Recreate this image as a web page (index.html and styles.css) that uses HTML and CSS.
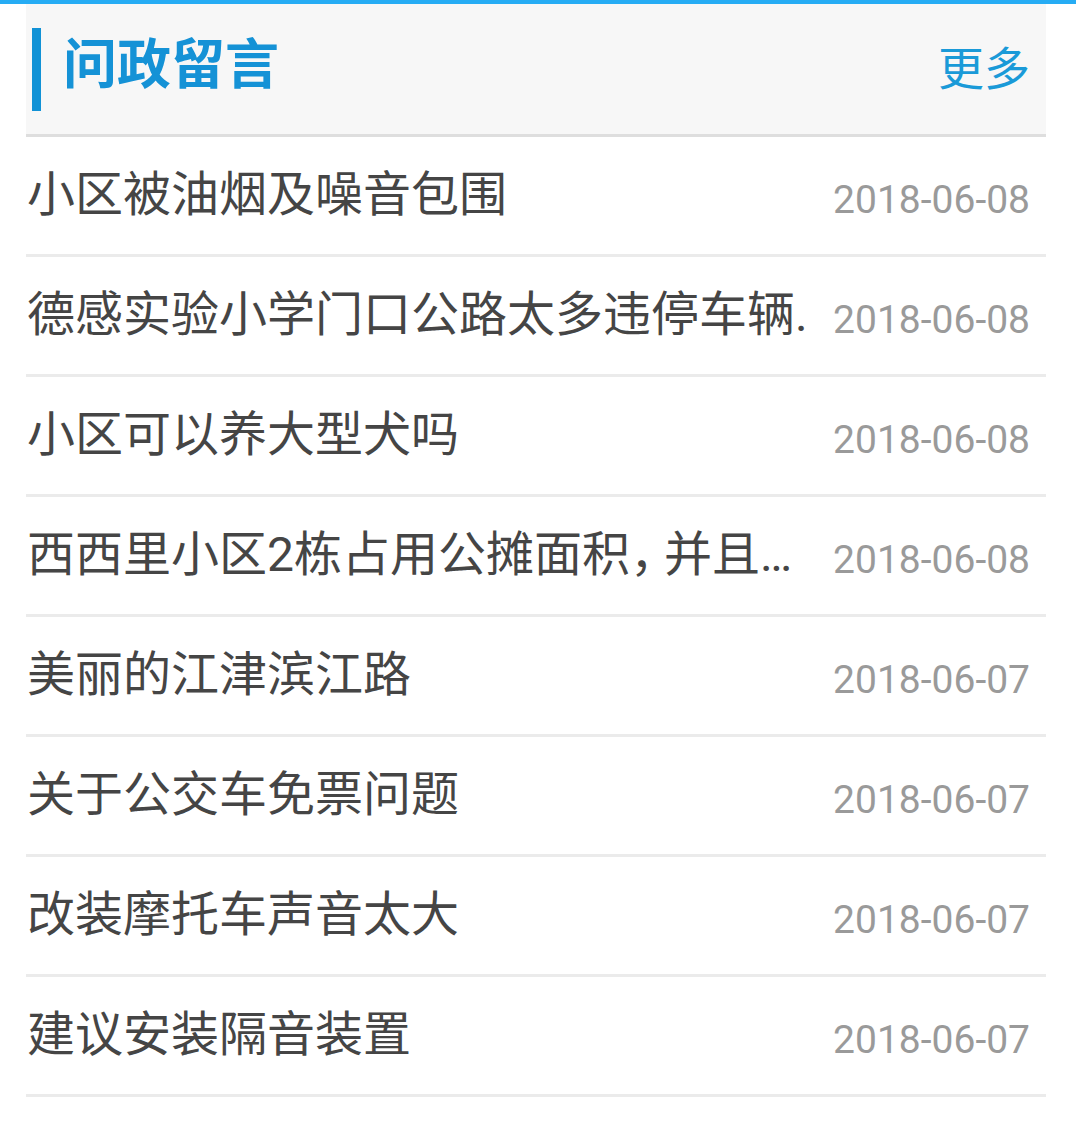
FILE: index.html
```html
<!DOCTYPE html>
<html lang="zh-CN">

<head>
    <meta charset="UTF-8">
    <title>问政留言</title>
    <link rel="stylesheet" href="styles.css">
</head>

<body>
    <div class="top-line"></div>
    <div class="panel">
        <div class="panel-head">
            <span class="head-bar"></span>
            <h2 class="head-title">问政留言</h2>
            <a class="head-more" href="#">更多</a>
        </div>
        <ul class="msg-list">
            <li class="msg-item"><span class="msg-title">小区被油烟及噪音包围</span><span class="msg-date">2018-06-08</span></li>
            <li class="msg-item"><span class="msg-title">德感实验小学门口公路太多违停车辆.</span><span class="msg-date">2018-06-08</span></li>
            <li class="msg-item"><span class="msg-title">小区可以养大型犬吗</span><span class="msg-date">2018-06-08</span></li>
            <li class="msg-item"><span class="msg-title">西西里小区2栋占用公摊面积<span class="punct">，</span>并且…</span><span class="msg-date">2018-06-08</span></li>
            <li class="msg-item"><span class="msg-title">美丽的江津滨江路</span><span class="msg-date">2018-06-07</span></li>
            <li class="msg-item"><span class="msg-title">关于公交车免票问题</span><span class="msg-date">2018-06-07</span></li>
            <li class="msg-item"><span class="msg-title">改装摩托车声音太大</span><span class="msg-date">2018-06-07</span></li>
            <li class="msg-item"><span class="msg-title">建议安装隔音装置</span><span class="msg-date">2018-06-07</span></li>
        </ul>
    </div>
</body>

</html>
```

FILE: styles.css
```css
body {
    margin: 0;
    background: #fff;
    font-family: Roboto, "Noto Sans CJK SC", sans-serif;
}

.top-line {
    height: 4px;
    background: #26acf4;
}

.panel {
    margin: 0 30px 0 26px;
}

.panel-head {
    display: flex;
    align-items: center;
    height: 130px;
    background: #f7f7f7;
    border-bottom: 3px solid #dedede;
}

.head-bar {
    width: 9px;
    height: 83px;
    margin-left: 6px;
    background: #1192d6;
}

.head-title {
    margin: 0 0 6px 22px;
    flex: 1;
    font-size: 54px;
    font-weight: bold;
    color: #1592d6;
    line-height: 1;
}

.head-more {
    margin-right: 16px;
    font-size: 46px;
    color: #1a9ad8;
    text-decoration: none;
    line-height: 1;
}

.msg-list {
    list-style: none;
    margin: 0;
    padding: 0;
}

.msg-item {
    display: flex;
    align-items: center;
    height: 117px;
    border-bottom: 3px solid #ebebeb;
}

.msg-title {
    flex: 1;
    padding-left: 1px;
    font-size: 48px;
    color: #454545;
    white-space: nowrap;
    line-height: 1.3;
}

.punct {
    letter-spacing: -14px;
}

.msg-date {
    padding: 10px 16px 0 0;
    font-size: 39px;
    color: #9a9a9a;
    line-height: 1.3;
}
```
